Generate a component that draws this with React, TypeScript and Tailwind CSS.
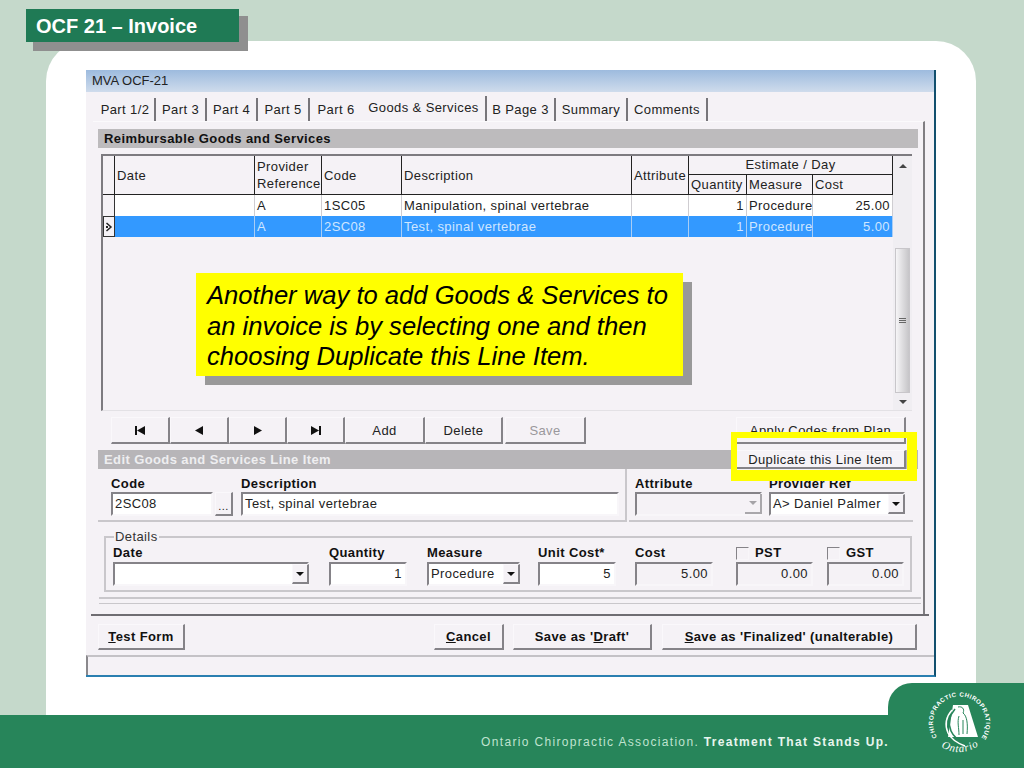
import type { ReactNode } from "react";

const win = "font-['Liberation_Sans',Arial,sans-serif] text-[13px] tracking-[0.4px] text-[#222]";

const raised = "border border-t-[#faf8fb] border-l-[#faf8fb] border-r-[#858388] border-b-[#858388] border-r-2 border-b-2 bg-[#f5f2f6]";
const sunken = "border-2 border-t-[#858388] border-l-[#858388] border-r-[#f8f6f9] border-b-[#f8f6f9]";
const cols = "grid-cols-[12px_140px_67px_80px_230px_57px_58px_66px_80px]";

function Btn({ w, h = "h-[27px]", children, className = "" }: { w: string; h?: string; children: ReactNode; className?: string }) {
  return <div className={`${w} ${h} ${raised} flex items-center justify-center shrink-0 pt-[1px] ${className}`}>{children}</div>;
}

function Arrow() {
  return (
    <div className={`w-[17px] h-[20px] -mr-[2px] ${raised} flex items-center justify-center`}>
      <div className="w-0 h-0 border-x-[4px] border-t-[4px] border-x-transparent border-t-[#111]" />
    </div>
  );
}

function Field({ w, label, children, right, grey, drop, labelH = "h-[16px]" }: { w: string; label: ReactNode; children?: ReactNode; right?: boolean; grey?: boolean; drop?: boolean; labelH?: string }) {
  return (
    <div className={`${w} shrink-0`}>
      <div className={`${labelH} leading-[16px] font-bold text-[#111]`}>{label}</div>
      <div className={`h-[24px] ${sunken} ${grey ? "" : "bg-white"} flex items-center ${drop ? "pl-[2px]" : "px-[2px]"} ${right ? "justify-end pr-[3px]" : ""}`}>{children}</div>
    </div>
  );
}

function Cell({ children, className = "" }: { children?: ReactNode; className?: string }) {
  return <div className={`flex items-center px-[2px] whitespace-nowrap ${className}`}>{children}</div>;
}

function Row({ sel, marker, prov, code, desc, qty, cost }: { sel?: boolean; marker?: boolean; prov: string; code: string; desc: string; qty: string; cost: string }) {
  const c = sel ? "bg-[#3399ff] text-[#cfe6ff] border-r border-r-[#a9cdf5]" : "bg-white text-[#222] border-r border-r-[#cfcdd1]";
  return (
    <div className={`grid ${cols} h-[21px]`}>
      <div className={`flex items-center justify-center bg-[#f5f2f6] ${marker ? "border border-[#333]" : "border-r border-r-[#333]"}`}>
        {marker && (
          <svg width="8" height="10" viewBox="0 0 8 10">
            <path d="M1.500 1 L6 5 L1.500 9" fill="none" stroke="#222" strokeWidth="1.500" />
            <path d="M1 4h2v2H1z" fill="#222" />
          </svg>
        )}
      </div>
      <Cell className={c} />
      <Cell className={c}>{prov}</Cell>
      <Cell className={c}>{code}</Cell>
      <Cell className={c}>{desc}</Cell>
      <Cell className={c} />
      <Cell className={`${c} justify-end`}>{qty}</Cell>
      <Cell className={c}>Procedure</Cell>
      <Cell className={`${c} justify-end`}>{cost}</Cell>
    </div>
  );
}

function Logo() {
  return (
    <svg viewBox="0 0 64 64" className="w-[64px] h-[64px]">
      <defs>
        <path id="arc" d="M9 46 A26.500 26.500 0 1 1 54 46" />
        <path id="arc2" d="M13 56 Q32 67 52 54" />
      </defs>
      <text className="font-['Liberation_Sans',sans-serif] font-bold" fontSize="6.200" fill="#fff" letterSpacing="0.5">
        <textPath href="#arc">CHIROPRACTIC CHIROPRATIQUE</textPath>
      </text>
      <path d="M25 14 L40 14 L50 46 L20 46 Z" fill="#fff" />
      <path d="M27 18 C21 25 20 33 23 40 C26 47 31 50 38 53" fill="none" stroke="#27855a" strokeWidth="1.600" />
      <path d="M24 19 C17 27 17 35 20 42 C23 48 29 52 37 55" fill="none" stroke="#fff" strokeWidth="1.500" />
      <path d="M30 16 C34 15 37 18 35 22 C39 25 40 33 39 43 M31 25 C29 31 31 37 31 44 M35 29 V43" fill="none" stroke="#27855a" strokeWidth="1" />
      <text className="font-['Liberation_Serif',serif]" fontSize="11" fontStyle="italic" fill="#fff" letterSpacing="0.8">
        <textPath href="#arc2">Ontario</textPath>
      </text>
    </svg>
  );
}

export default function App() {
  const tabs: [string, string][] = [
    ["Part 1/2", "w-[60px]"],
    ["Part 3", "w-[51px]"],
    ["Part 4", "w-[51px]"],
    ["Part 5", "w-[52px]"],
    ["Part 6", "w-[52px]"],
    ["Goods & Services", "w-[125px]"],
    ["B Page 3", "w-[69px]"],
    ["Summary", "w-[72px]"],
    ["Comments", "w-[80px]"],
  ];

  return (
    <div className="relative w-[1024px] h-[768px] overflow-hidden bg-[#c5d9cb] flex flex-col">
      {/* Slide title */}
      <div className="absolute left-[33px] top-[16px] w-[215px] h-[35px] bg-[#8f8f8f] z-10" />
      <div className="absolute left-[26px] top-[9px] w-[213px] h-[33px] bg-[#1f7a55] z-10 flex items-center pl-[10px] font-['Liberation_Sans',Arial,sans-serif] font-bold text-[20px] text-white">
        OCF 21 – Invoice
      </div>

      <div className="h-[715px] shrink-0 pt-[41px] pl-[46px]">
        <div className="w-[930px] h-[674px] bg-white rounded-t-[40px] pt-[29px] pl-[40px]">
          {/* Application window */}
          <div className={`${win} relative w-[850px] h-[607px] bg-[#f5f2f6] flex flex-col border-r-2 border-r-[#12506e] border-b-2 border-b-[#2a7fb0]`}>
            <div className="h-[22px] shrink-0 bg-gradient-to-b from-[#9dbbde] to-[#cfdcec] flex items-center pl-[6px] text-[13px] tracking-normal">MVA OCF-21</div>

            <div className="flex h-[29px] shrink-0 pl-[10px] items-end">
              {tabs.map(([t, w], i) => (
                <div key={t} className={`${w} shrink-0 flex items-center justify-center ${i === 5 ? "h-[25px] pb-[2px] border-r-2 border-r-[#77757a]" : i === 4 ? "h-[23px]" : "h-[23px] border-r-2 border-r-[#77757a]"}`}>{t}</div>
              ))}
            </div>

            {/* Tab page */}
            <div className="ml-[7px] w-[832px] h-[493px] shrink-0 border-r-2 border-r-[#807e82] border-t border-t-[#fbfafc] pl-[5px] pt-[7px]">
              <div className="w-[820px] h-[19px] bg-[#bdbbbd] flex items-center pl-[6px] font-bold text-[#111]">Reimbursable Goods and Services</div>

              {/* Grid */}
              <div className="mt-[6px] ml-[3px] w-[811px] h-[257px] flex border-t-2 border-l-2 border-t-[#7d7b80] border-l-[#7d7b80] border-b border-b-[#e3e1e5]">
                <div className="w-[790px] shrink-0">
                  <div className={`grid ${cols} grid-rows-[19px_20px] h-[39px] border-b border-b-[#222]`}>
                    <Cell className="row-span-2 border-r border-r-[#222]" />
                    <Cell className="row-span-2 border-r border-r-[#222]">Date</Cell>
                    <div className="row-span-2 border-r border-r-[#222] pl-[2px] leading-[17px] pt-[2px] whitespace-nowrap">Provider<br />Reference</div>
                    <Cell className="row-span-2 border-r border-r-[#222]">Code</Cell>
                    <Cell className="row-span-2 border-r border-r-[#222]">Description</Cell>
                    <Cell className="row-span-2 border-r border-r-[#222]">Attribute</Cell>
                    <Cell className="col-span-3 justify-center border-r border-r-[#222] border-b border-b-[#222]">Estimate / Day</Cell>
                    <Cell className="border-r border-r-[#222]">Quantity</Cell>
                    <Cell className="border-r border-r-[#222]">Measure</Cell>
                    <Cell className="border-r border-r-[#222]">Cost</Cell>
                  </div>
                  <Row prov="A" code="1SC05" desc="Manipulation, spinal vertebrae" qty="1" cost="25.00" />
                  <Row sel marker prov="A" code="2SC08" desc="Test, spinal vertebrae" qty="1" cost="5.00" />
                </div>
                {/* Scrollbar */}
                <div className="w-[19px] shrink-0 flex flex-col items-center bg-[#f0eef2] pt-[8px] pb-[6px]">
                  <div className="w-0 h-0 border-x-[4px] border-b-[4px] border-x-transparent border-b-[#444]" />
                  <div className="mt-[80px] w-[15px] h-[145px] bg-gradient-to-r from-[#f6f5f7] to-[#c6c5c8] border border-[#c8c6ca] flex flex-col gap-[1px] items-center justify-center">
                    <div className="w-[7px] h-[1px] bg-[#666]" />
                    <div className="w-[7px] h-[1px] bg-[#666]" />
                    <div className="w-[7px] h-[1px] bg-[#666]" />
                  </div>
                  <div className="mt-auto w-0 h-0 border-x-[4px] border-t-[4px] border-x-transparent border-t-[#444]" />
                </div>
              </div>

              {/* Nav buttons */}
              <div className="mt-[6px] ml-[13px] h-[27px] flex">
                <Btn w="w-[59px]"><svg width="12" height="9" viewBox="0 0 12 9"><path d="M1 0h2v9H1zM11 0v9L3 4.500z" fill="#111" /></svg></Btn>
                <Btn w="w-[59px]"><svg width="10" height="9" viewBox="0 0 10 9"><path d="M9 0v9L1 4.500z" fill="#111" /></svg></Btn>
                <Btn w="w-[58px]"><svg width="10" height="9" viewBox="0 0 10 9"><path d="M1 0v9l8-4.500z" fill="#111" /></svg></Btn>
                <Btn w="w-[58px]"><svg width="12" height="9" viewBox="0 0 12 9"><path d="M1 0v9l8-4.500zM9 0h2v9H9z" fill="#111" /></svg></Btn>
                <Btn w="w-[80px]">Add</Btn>
                <Btn w="w-[78px]">Delete</Btn>
                <Btn w="w-[81px]" className="ml-[2px] text-[#9a989c]">Save</Btn>
                <Btn w="w-[170px]" className="ml-[150px]">Apply Codes from Plan</Btn>
              </div>

              {/* Edit section */}
              <div className="mt-[6px] w-[820px] h-[19px] bg-[#b7b5b8] flex items-center justify-between pl-[6px] font-bold text-[#eeeef0]">
                <span>Edit Goods and Services Line Item</span>
                <Btn w="w-[170px]" h="h-[19px]" className="mr-[12px] font-normal text-[#222]">Duplicate this Line Item</Btn>
              </div>

              <div className="flex h-[53px]">
                <div className="w-[529px] shrink-0 border-r-2 border-b-2 border-r-[#c9c7cb] border-b-[#c9c7cb] pl-[13px] pt-[7px] flex items-start">
                  <Field w="w-[102px]" label="Code">2SC08</Field>
                  <Btn w="w-[18px]" h="h-[24px]" className="ml-[2px] mt-[16px] items-end text-[11px]">...</Btn>
                  <Field w="w-[378px] ml-[8px]" label="Description">Test, spinal vertebrae</Field>
                </div>
                <div className="w-[284px] shrink-0 ml-[2px] border-b-2 border-b-[#c9c7cb] pl-[6px] pt-[7px] flex gap-[7px]">
                  <Field w="w-[127px]" label="Attribute" grey drop>
                    <div className="ml-auto w-[17px] h-[20px] -mr-[2px] border-r-2 border-b-2 border-r-[#a9a7ab] border-b-[#a9a7ab] flex items-center justify-center">
                      <div className="w-0 h-0 border-x-[4px] border-t-[4px] border-x-transparent border-t-[#a5a3a7]" />
                    </div>
                  </Field>
                  <Field w="w-[136px]" label="Provider Ref" drop>
                    <span className="flex-1 whitespace-nowrap">A&gt; Daniel Palmer</span>
                    <Arrow />
                  </Field>
                </div>
              </div>

              {/* Details */}
              <fieldset className="mt-[8px] ml-[6px] w-[808px] h-[62px] border-2 border-[#c9c7cb] pl-[7px] pr-[6px]">
                <legend className="ml-[1px] px-[1px] leading-[13px] text-[#333]">Details</legend>
                <div className="flex mt-[2px]">
                  <Field w="w-[196px] mr-[20px]" labelH="h-[17px]" label="Date" drop>
                    <span className="flex-1" />
                    <Arrow />
                  </Field>
                  <Field w="w-[78px] mr-[20px]" labelH="h-[17px]" label="Quantity" right>1</Field>
                  <Field w="w-[93px] mr-[18px]" labelH="h-[17px]" label="Measure" drop>
                    <span className="flex-1">Procedure</span>
                    <Arrow />
                  </Field>
                  <Field w="w-[78px] mr-[19px]" labelH="h-[17px]" label="Unit Cost*" right>5</Field>
                  <Field w="w-[78px] mr-[23px]" labelH="h-[17px]" label="Cost" right grey>5.00</Field>
                  <Field w="w-[77px] mr-[14px]" labelH="h-[17px]" label={<span className="flex items-center gap-[6px]"><span className={`w-[13px] h-[13px] ${sunken} !border-[1px]`} />PST</span>} right grey>0.00</Field>
                  <Field w="w-[77px]" labelH="h-[17px]" label={<span className="flex items-center gap-[6px]"><span className={`w-[13px] h-[13px] ${sunken} !border-[1px]`} />GST</span>} right grey>0.00</Field>
                </div>
              </fieldset>

              <div className="mt-[5px] ml-[1px] w-[822px] h-[7px] border-t-2 border-b border-t-[#c9c7cb] border-b-[#c9c7cb]" />
            </div>

            {/* Dialog buttons */}
            <div className="border-t-2 border-t-[#6f6d72] ml-[5px] mr-[5px]" />
            <div className="flex mt-[8px] h-[26px] pl-[12px] font-bold text-[#111]">
              <Btn w="w-[87px]" h="h-[26px]"><span><u>T</u>est Form</span></Btn>
              <Btn w="w-[70px]" h="h-[26px]" className="ml-[249px]"><span><u>C</u>ancel</span></Btn>
              <Btn w="w-[139px]" h="h-[26px]" className="ml-[9px]"><span>Save as '<u>D</u>raft'</span></Btn>
              <Btn w="w-[255px]" h="h-[26px]" className="ml-[10px]"><span><u>S</u>ave as 'Finalized' (unalterable)</span></Btn>
            </div>
            <div className="mt-[5px] flex-1 border-t-2 border-l-2 border-t-[#c4c2c6] border-l-[#8a888c]" />

            {/* Callout */}
            <div className="absolute left-[119px] top-[212px] w-[487px] h-[103px] bg-[#999] z-10" />
            <div className="absolute left-[110px] top-[203px] w-[487px] h-[103px] bg-[#ffff00] z-10 pl-[11px] pt-[7px] font-['Liberation_Sans',Arial,sans-serif] italic text-[25.600px] leading-[30.500px] tracking-normal text-black whitespace-nowrap">
              Another way to add Goods &amp; Services to<br />an invoice is by selecting one and then<br />choosing Duplicate this Line Item.
            </div>

            {/* Highlight around the button */}
            <div className="absolute left-[645px] top-[362px] w-[186px] h-[49px] border-t-[6px] border-l-[6px] border-r-[10px] border-b-[11px] border-[#ffff00] z-10" />
          </div>
        </div>
      </div>

      {/* Footer */}
      <div className="flex-1 bg-[#27855a] flex items-center justify-end pr-[135px] font-['Liberation_Sans',Arial,sans-serif] text-[12px] tracking-[1.330px] text-[#bfe3cf] whitespace-nowrap">
        Ontario Chiropractic Association.&nbsp;<span className="font-bold text-[#e8f5ee]">Treatment That Stands Up.</span>
      </div>
      <div className="absolute left-[888px] top-[683px] w-[136px] h-[40px] bg-[#27855a] rounded-tl-[24px]" />
      <div className="absolute left-[928px] top-[691px]"><Logo /></div>
    </div>
  );
}
